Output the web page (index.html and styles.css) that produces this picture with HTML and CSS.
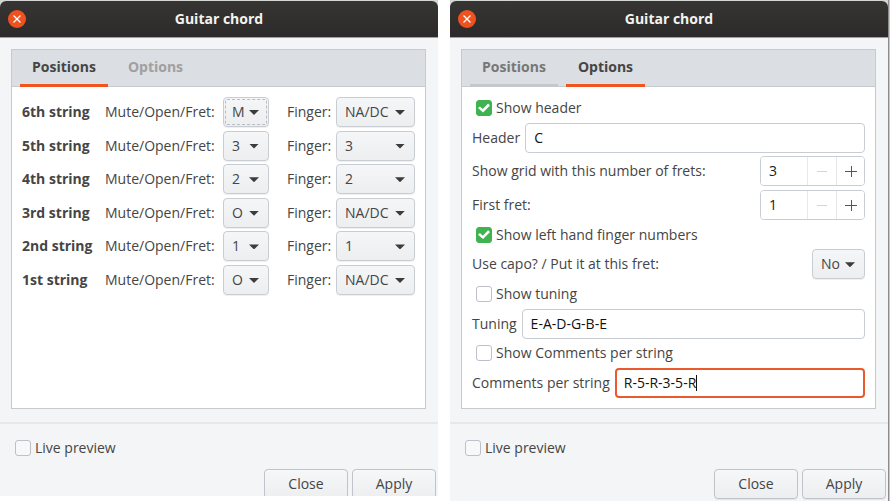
FILE: index.html
```html
<!DOCTYPE html>
<html lang="en">
<head>
<meta charset="utf-8">
<title>Guitar chord</title>
<link rel="stylesheet" href="styles.css">
</head>
<body>
<main class="desktop">
  <section class="window window-clipped">
    <header class="titlebar">
      <button class="close" aria-label="Close window"><svg viewBox="0 0 18 18" width="18" height="18"><circle cx="9" cy="9" r="9" fill="#f0521f"/><path d="M5.5 5.5l7 7M12.500 5.500l-7 7" stroke="#fff" stroke-width="1.300"/></svg></button>
      <h1>Guitar chord</h1>
    </header>
    <div class="content">
      <div class="notebook">
        <nav class="tabs"><button class="tab active">Positions</button><button class="tab faded">Options</button></nav>
        <div class="panel">
          <div class="strings">
            <b>6th string</b><label for="f6">Mute/Open/Fret:</label><span class="drop focused"><select id="f6"><option>M</option></select></span><label for="g6">Finger:</label><span class="drop"><select id="g6"><option>NA/DC</option></select></span>
            <b>5th string</b><label for="f5">Mute/Open/Fret:</label><span class="drop"><select id="f5"><option>3</option></select></span><label for="g5">Finger:</label><span class="drop"><select id="g5"><option>3</option></select></span>
            <b>4th string</b><label for="f4">Mute/Open/Fret:</label><span class="drop"><select id="f4"><option>2</option></select></span><label for="g4">Finger:</label><span class="drop"><select id="g4"><option>2</option></select></span>
            <b>3rd string</b><label for="f3">Mute/Open/Fret:</label><span class="drop"><select id="f3"><option>O</option></select></span><label for="g3">Finger:</label><span class="drop"><select id="g3"><option>NA/DC</option></select></span>
            <b>2nd string</b><label for="f2">Mute/Open/Fret:</label><span class="drop"><select id="f2"><option>1</option></select></span><label for="g2">Finger:</label><span class="drop"><select id="g2"><option>1</option></select></span>
            <b>1st string</b><label for="f1">Mute/Open/Fret:</label><span class="drop"><select id="f1"><option>O</option></select></span><label for="g1">Finger:</label><span class="drop"><select id="g1"><option>NA/DC</option></select></span>
          </div>
        </div>
      </div>
    </div>
    <footer class="footer">
      <label class="check"><input type="checkbox">Live preview</label>
      <div class="actions"><button class="btn">Close</button><button class="btn">Apply</button></div>
    </footer>
  </section>

  <section class="window">
    <header class="titlebar">
      <button class="close" aria-label="Close window"><svg viewBox="0 0 18 18" width="18" height="18"><circle cx="9" cy="9" r="9" fill="#f0521f"/><path d="M5.5 5.5l7 7M12.500 5.500l-7 7" stroke="#fff" stroke-width="1.300"/></svg></button>
      <h1>Guitar chord</h1>
    </header>
    <div class="content">
      <div class="notebook">
        <nav class="tabs"><button class="tab hovered">Positions</button><button class="tab active">Options</button></nav>
        <div class="panel options">
          <label class="check inset"><input type="checkbox" checked>Show header</label>
          <div class="row"><label for="header">Header</label><input class="entry" id="header" type="text" value="C"></div>
          <div class="row spread"><label for="frets">Show grid with this number of frets:</label>
            <span class="spin"><input id="frets" type="text" value="3"><button disabled aria-label="Decrease"><svg viewBox="0 0 12 12" width="12" height="12"><path d="M1 6.500h10"/></svg></button><button aria-label="Increase"><svg viewBox="0 0 12 12" width="12" height="12"><path d="M0 6.500h12M6.500 1v11"/></svg></button></span></div>
          <div class="row spread"><label for="first">First fret:</label>
            <span class="spin"><input id="first" type="text" value="1"><button disabled aria-label="Decrease"><svg viewBox="0 0 12 12" width="12" height="12"><path d="M1 6.500h10"/></svg></button><button aria-label="Increase"><svg viewBox="0 0 12 12" width="12" height="12"><path d="M0 6.500h12M6.500 1v11"/></svg></button></span></div>
          <label class="check inset"><input type="checkbox" checked>Show left hand finger numbers</label>
          <div class="row spread"><label for="capo">Use capo? / Put it at this fret:</label><span class="drop capo"><select id="capo"><option>No</option></select></span></div>
          <label class="check inset"><input type="checkbox">Show tuning</label>
          <div class="row"><label for="tuning">Tuning</label><input class="entry" id="tuning" type="text" value="E-A-D-G-B-E"></div>
          <label class="check inset"><input type="checkbox">Show Comments per string</label>
          <div class="row"><label for="comments">Comments per string</label><span class="editing"><input class="entry" id="comments" type="text" value="R-5-R-3-5-R"><i class="caret"></i></span></div>
        </div>
      </div>
    </div>
    <footer class="footer">
      <label class="check"><input type="checkbox">Live preview</label>
      <div class="actions"><button class="btn">Close</button><button class="btn">Apply</button></div>
    </footer>
  </section>
  <div class="backdrop"></div>
</main>
</body>
</html>
```
FILE: styles.css
```css
* { box-sizing: border-box; }
body {
  margin: 0;
  background: #fff;
  color: #454545;
  font: 14px/20px "Open Sans", "Noto Sans", sans-serif;
}
button, input, select { font: inherit; color: inherit; margin: 0; }
svg { display: block; }

.desktop {
  display: grid;
  grid-template-columns: minmax(0, 450fr) minmax(0, 438fr) 2px;
  height: 100vh;
  overflow: hidden;
}
.window {
  display: flex;
  flex-direction: column;
  min-width: 0;
  margin-right: 12px;
  padding-top: 1px;
  background: #f4f5f7;
  overflow: hidden;
}
.window + .window { margin-right: 0; }
.window-clipped { margin-bottom: 5px; }
.backdrop { border-left: 1px solid #8c8c8c; background: #c9c9c9; }

.titlebar {
  flex: none;
  display: grid;
  grid-template-columns: 18px 1fr 18px;
  align-items: center;
  height: 37px;
  padding: 0 8px;
  border-bottom: 1px solid #a0a0a0;
  border-radius: 6px 6px 0 0;
  background: linear-gradient(#363533, #2c2a2a);
  box-shadow: 0 -6px 0 #d4d6d4;
}
.titlebar h1 {
  margin: 0;
  font-size: 14px;
  line-height: 20px;
  font-weight: 700;
  color: #f4f3ef;
  text-align: center;
}
.close { padding: 0; border: 0; background: none; }

.content { flex: none; padding: 11px 12px 13px 11px; border-bottom: 2px solid #e7e8ea; }
.notebook { border: 1px solid #c6cad0; background: #fff; }
.tabs {
  display: flex;
  gap: 8px;
  height: 37px;
  padding: 0 8px;
  border-bottom: 1px solid #c6cad0;
  background: #dbdee3;
}
.tab {
  height: 37px;
  padding: 0 12px;
  border: 0;
  border-bottom: 3px solid transparent;
  background: none;
  font-weight: 700;
  color: #454545;
}
.tab.active { border-bottom-color: #f0541f; }
.tab.faded { color: #a0a0a0; }
.tab.hovered { color: #777; border-bottom-color: #c4c8cc; }

.panel { min-height: 321px; padding: 10px; }
.strings {
  display: grid;
  grid-template-columns: 83px 118px 64px 49px 79px;
  align-content: space-between;
  align-items: center;
  height: 198px;
  white-space: nowrap;
}
.drop { position: relative; display: block; width: 46px; }
.strings .drop:nth-child(5n) { width: 79px; }
.drop.capo { width: 53px; }
.drop select {
  display: block;
  appearance: none;
  width: 100%;
  height: 30px;
  padding: 0 8px;
  border: 1px solid #c8ccd3;
  border-radius: 4px;
  background: linear-gradient(#f5f6f7, #edeef0);
  box-shadow: 0 1px 1px #0001;
}
.drop::after {
  content: "";
  position: absolute;
  right: 10px;
  top: 13px;
  width: 10px;
  height: 5px;
  background: #3c3c3c;
  clip-path: polygon(0 0, 100% 0, 50% 100%);
  pointer-events: none;
}
.focused select { outline: 1px dashed #b9bcc0; outline-offset: -3px; }

.options { display: flex; flex-direction: column; justify-content: space-between; }
.row { display: flex; align-items: center; gap: 5px; white-space: nowrap; }
.spread { justify-content: space-between; }
.check { display: flex; align-items: center; gap: 4px; height: 22px; }
.inset { padding-left: 4px; }
.check input {
  appearance: none;
  display: grid;
  place-items: center;
  width: 16px;
  height: 16px;
  border: 1px solid #bcc0c8;
  border-radius: 3px;
  background: #fff;
}
.footer .check input { background: #f7f8fa; }
.check input:checked { border-color: #3eb34f; background: #3eb34f; }
.check input:checked::before {
  content: "";
  width: 12px;
  height: 10px;
  background: #fff;
  clip-path: polygon(0 50%, 16% 34%, 40% 60%, 84% 6%, 100% 24%, 42% 94%);
}
.entry {
  flex: 1;
  min-width: 0;
  width: 100%;
  height: 30px;
  padding: 0 8px;
  border: 1px solid #c8ccd3;
  border-radius: 4px;
  background: #fff;
  color: #111;
}
.editing { position: relative; display: flex; flex: 1; }
.editing .entry { border: 2px solid #ea5a2c; padding: 0 7px; }
.caret { position: absolute; left: 81px; top: 7px; width: 1px; height: 16px; background: #111; }
.spin {
  display: grid;
  grid-template-columns: 46px 29px 28px;
  height: 30px;
  border: 1px solid #c8ccd3;
  border-radius: 4px;
  overflow: hidden;
}
.spin input { width: 100%; padding: 0 8px; border: 0; background: #fff; color: #222; }
.spin button {
  display: grid;
  place-items: center;
  padding: 0;
  border: 0;
  border-left: 1px solid #e6e8ea;
  background: #fff;
}
.spin path { stroke: #555; fill: none; }
.spin button:disabled path { stroke: #d4d4d4; }

.footer { flex: none; padding: 13px 2px 2px; }
.footer .check { padding-left: 13px; }
.actions { display: flex; justify-content: flex-end; gap: 4px; margin-top: 10px; }
.btn {
  width: 84px;
  height: 30px;
  padding: 0;
  border: 1px solid #c0c3ca;
  border-radius: 4px;
  background: linear-gradient(#f6f7f8, #edeef0);
  box-shadow: 0 1px 1px #0001;
}
```
